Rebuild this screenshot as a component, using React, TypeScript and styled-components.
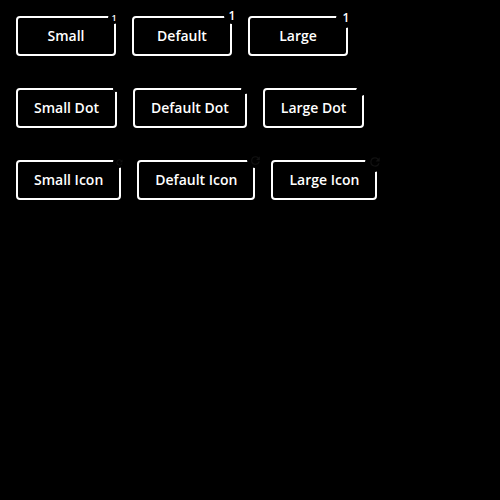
import React from 'react';
import styled, { createGlobalStyle } from 'styled-components';

const GlobalStyle = createGlobalStyle`
  html, body { margin: 0; background: #000; }
  body { min-height: 100vh; }
`;

const Page = styled.main`
  display: flex;
  flex-direction: column;
  gap: 32px;
  padding: 16px;
  font-family: "Open Sans", sans-serif;
`;

const Row = styled.div`
  display: flex;
  gap: 16px;
`;

const Button = styled.button`
  position: relative;
  box-sizing: border-box;
  height: 40px;
  min-width: 100px;
  padding: 0 16px;
  border: 2px solid #fff;
  border-radius: 4px;
  background: #000;
  color: #fff;
  font: 600 14px/20px "Open Sans", sans-serif;
  white-space: nowrap;
`;

const Badge = styled.span<{ $size: number; $top: number; $right: number; $font?: number; $lift?: number }>`
  position: absolute;
  box-sizing: border-box;
  padding-bottom: ${(p) => p.$lift ?? 0}px;
  top: ${(p) => p.$top}px;
  right: ${(p) => p.$right}px;
  width: ${(p) => p.$size}px;
  height: ${(p) => p.$size}px;
  display: flex;
  align-items: center;
  justify-content: center;
  border-radius: 50%;
  background: #000;
  color: #fff;
  font-size: ${(p) => p.$font ?? 12}px;
  font-weight: 600;
  line-height: 1;
`;

const BadgeIcon = styled.svg<{ $size: number }>`
  width: ${(p) => p.$size}px;
  height: ${(p) => p.$size}px;
  flex: none;
  fill: #111;
`;

const Refresh = ({ size }: { size: number }) => (
  <BadgeIcon $size={size} viewBox="0 0 24 24" aria-hidden="true">
    <path d="M17.65 6.35A7.96 7.96 0 0 0 12 4a8 8 0 1 0 7.73 10h-2.08A6 6 0 1 1 12 6c1.66 0 3.14.69 4.22 1.78L13 11h7V4z" />
  </BadgeIcon>
);

const counts = [
  { label: 'Small', size: 12, top: -6, right: -6, font: 9, lift: 2 },
  { label: 'Default', size: 16, top: -10, right: -10, font: 12, lift: 0 },
  { label: 'Large', size: 20, top: -10, right: -10, font: 12, lift: 0 },
];
const dots = [
  { label: 'Small Dot', size: 6, top: -4, right: -4 },
  { label: 'Default Dot', size: 8, top: -4, right: -4 },
  { label: 'Large Dot', size: 10, top: -4, right: -4 },
];
const icons = [
  { label: 'Small Icon', size: 12, top: -6, right: -6, icon: 9 },
  { label: 'Default Icon', size: 16, top: -10, right: -10, icon: 13 },
  { label: 'Large Icon', size: 20, top: -10, right: -10, icon: 14 },
];

export default function App() {
  return (
    <>
      <GlobalStyle />
      <Page>
        <Row>
          {counts.map((b) => (
            <Button key={b.label}>
              {b.label}
              <Badge $size={b.size} $top={b.top} $right={b.right} $font={b.font} $lift={b.lift}>1</Badge>
            </Button>
          ))}
        </Row>
        <Row>
          {dots.map((b) => (
            <Button key={b.label}>
              {b.label}
              <Badge $size={b.size} $top={b.top} $right={b.right} />
            </Button>
          ))}
        </Row>
        <Row>
          {icons.map((b) => (
            <Button key={b.label}>
              {b.label}
              <Badge $size={b.size} $top={b.top} $right={b.right}>
                <Refresh size={b.icon} />
              </Badge>
            </Button>
          ))}
        </Row>
      </Page>
    </>
  );
}
